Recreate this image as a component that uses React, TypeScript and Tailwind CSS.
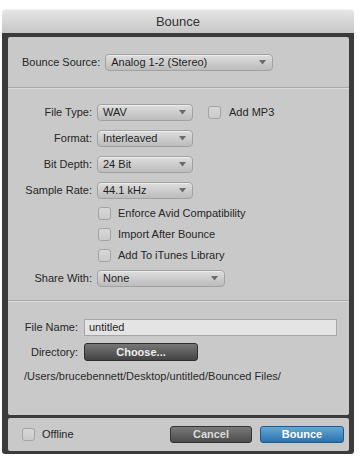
const font = { fontFamily: '"Liberation Sans", Arial, sans-serif' };

function Caret() {
  return (
    <svg width="7" height="5" viewBox="0 0 7 5" className="shrink-0">
      <path d="M0 0 L7 0 L3.5 4.5 Z" fill="#6b6b6b" />
    </svg>
  );
}

function Select({ value, width }: { value: string; width: string }) {
  return (
    <div
      className={`${width} h-[17px] flex items-center justify-between pl-[5px] pr-[6px] rounded-[4px] border border-[#a2a2a2] bg-gradient-to-b from-[#dedede] to-[#bcbcbc] text-[11px] text-[#1e1e1e] shadow-[inset_0_1px_0_#ececec]`}
    >
      <span className="leading-none">{value}</span>
      <Caret />
    </div>
  );
}

function Check() {
  return (
    <div className="w-[13px] h-[13px] rounded-[3px] border border-[#a4a4a4] bg-gradient-to-b from-[#d8d8d8] to-[#cacaca] shrink-0" />
  );
}

function Row({ label, children }: { label: string; children: React.ReactNode }) {
  return (
    <div className="h-[26px] flex items-center">
      <div className="w-[84px] text-right text-[11px] text-[#262626]">{label}</div>
      <div className="ml-[5px] flex items-center">{children}</div>
    </div>
  );
}

function CheckRow({ label }: { label: string }) {
  return (
    <div className="h-[21px] flex items-center pl-[90px] gap-[7px]">
      <Check />
      <span className="text-[11px] text-[#262626]">{label}</span>
    </div>
  );
}

function Separator() {
  return (
    <div>
      <div className="h-px bg-[#a8a8a8]" />
      <div className="h-px bg-[#dcdcdc]" />
    </div>
  );
}

export default function App() {
  return (
    <div className="w-[360px] h-[460px] bg-white pt-[9px] pl-[2px]" style={font}>
      <div className="w-[352px] flex flex-col">
        {/* Title bar */}
        <div className="h-[24px] rounded-t-[4px] border-t border-[#f2f2f2] bg-gradient-to-b from-[#e6e6e6] to-[#c6c6c6] flex items-center justify-center">
          <span className="text-[13px] text-[#333]">Bounce</span>
        </div>

        {/* Dark body */}
        <div className="bg-[#3b3b3b] pt-[4px] pb-[3px] pl-[6px] pr-[5px] rounded-b-[3px]">
          {/* Main panel */}
          <div className="h-[378px] bg-[#c9c9c9] rounded-[2px] flex flex-col">
            <div className="h-[50px] flex items-center pl-[14px] gap-[5px]">
              <span className="text-[11px] text-[#262626]">Bounce Source:</span>
              <Select value="Analog 1-2 (Stereo)" width="w-[168px]" />
            </div>
            <Separator />

            <div className="h-[211px] pt-[10px] flex flex-col">
              <Row label="File Type:">
                <Select value="WAV" width="w-[96px]" />
                <div className="ml-[15px] flex items-center gap-[8px]">
                  <Check />
                  <span className="text-[11px] text-[#262626]">Add MP3</span>
                </div>
              </Row>
              <Row label="Format:">
                <Select value="Interleaved" width="w-[96px]" />
              </Row>
              <Row label="Bit Depth:">
                <Select value="24 Bit" width="w-[96px]" />
              </Row>
              <Row label="Sample Rate:">
                <Select value="44.1 kHz" width="w-[96px]" />
              </Row>
              <CheckRow label="Enforce Avid Compatibility" />
              <CheckRow label="Import After Bounce" />
              <CheckRow label="Add To iTunes Library" />
              <div className="h-[24px] flex items-center">
                <div className="w-[84px] text-right text-[11px] text-[#262626]">Share With:</div>
                <div className="ml-[5px]">
                  <Select value="None" width="w-[128px]" />
                </div>
              </div>
            </div>
            <Separator />

            <div className="flex-1 pt-[15px] flex flex-col">
              <div className="h-[20px] flex items-center">
                <div className="w-[70px] text-right text-[11px] text-[#262626]">File Name:</div>
                <div className="ml-[6px] w-[253px] h-[17px] border border-[#a6a6a6] bg-[#e4e4e4] flex items-center pl-[4px] text-[11px] text-[#262626]">
                  untitled
                </div>
              </div>
              <div className="h-[20px] mt-[5px] flex items-center">
                <div className="w-[70px] text-right text-[11px] text-[#262626]">Directory:</div>
                <div className="ml-[6px] w-[114px] h-[18px] rounded-[3px] border border-[#2e2e2e] bg-gradient-to-b from-[#777] to-[#444] flex items-center justify-center text-[11px] font-bold text-[#ececec]">
                  Choose...
                </div>
              </div>
              <div className="h-[20px] mt-[4px] pl-[16px] flex items-center text-[11px] text-[#2a2a2a]">
                /Users/brucebennett/Desktop/untitled/Bounced Files/
              </div>
            </div>
          </div>

          {/* Footer */}
          <div className="mt-[3px] h-[33px] bg-[#c9c9c9] rounded-[2px] flex items-center pl-[14px] pr-[5px]">
            <Check />
            <span className="ml-[7px] text-[11px] text-[#262626]">Offline</span>
            <div className="ml-auto flex items-center gap-[8px]">
              <div className="w-[82px] h-[17px] rounded-[3px] border border-[#333] bg-gradient-to-b from-[#7a7a7a] to-[#4c4c4c] flex items-center justify-center text-[11px] font-bold text-[#dcdcdc]">
                Cancel
              </div>
              <div className="w-[84px] h-[17px] rounded-[3px] border border-[#1f5a8a] bg-gradient-to-b from-[#63a8d6] to-[#2b72ad] flex items-center justify-center text-[11px] font-bold text-white">
                Bounce
              </div>
            </div>
          </div>
        </div>
      </div>
    </div>
  );
}
